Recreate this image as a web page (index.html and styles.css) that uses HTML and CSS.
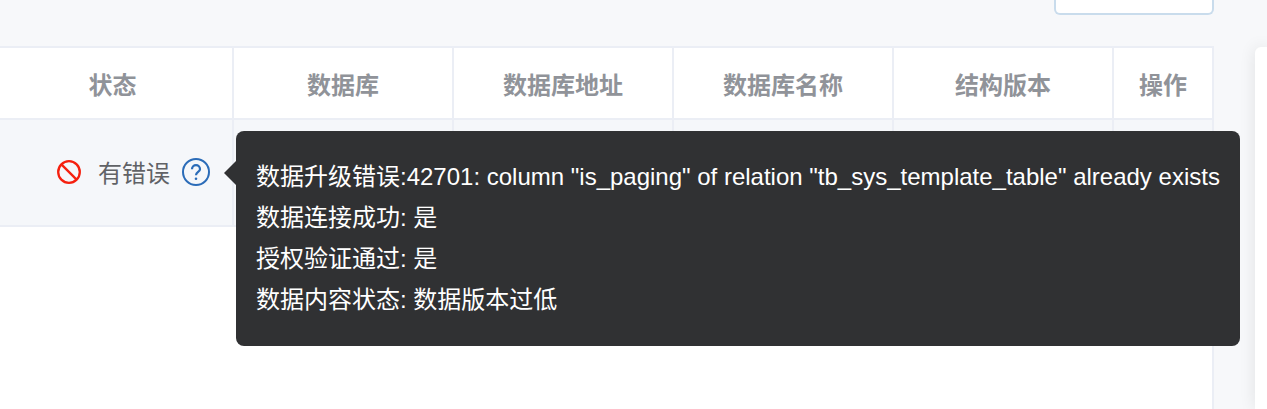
FILE: index.html
```html
<!DOCTYPE html>
<html lang="zh-CN">
<head>
  <meta charset="UTF-8">
  <title>数据库状态</title>
  <link rel="stylesheet" href="styles.css">
</head>
<body>

  <!-- Toolbar -->
  <div class="toolbar">
    <div class="tool-btn"></div>
  </div>

  <div class="content">
    <!-- Table -->
    <div class="table-panel">
      <div class="row head-row">
        <div class="cell col-status">状态</div>
        <div class="cell col-wide">数据库</div>
        <div class="cell col-wide">数据库地址</div>
        <div class="cell col-wide">数据库名称</div>
        <div class="cell col-wide">结构版本</div>
        <div class="cell col-op">操作</div>
      </div>
      <div class="row body-row">
        <div class="cell col-status status-cell">
          <svg class="icon-error" width="24" height="24" viewBox="0 0 24 24" fill="none" stroke="#f5200f" stroke-width="2.3">
            <circle cx="12" cy="12" r="10.8"/>
            <path d="M4.4 4.4 19.6 19.6"/>
          </svg>
          <span class="status-text">有错误</span>
          <svg class="icon-help" width="28" height="28" viewBox="0 0 28 28" fill="none" stroke="#2b6cb8">
            <circle cx="14" cy="14" r="13" stroke-width="2"/>
            <path d="M10 11.2a4 4 0 0 1 8 0c0 2.6-4 3-4 6" stroke-width="2.2"/>
            <circle cx="14" cy="20.8" r="1.3" fill="#2b6cb8" stroke="none"/>
          </svg>
        </div>
        <div class="cell col-wide"></div>
        <div class="cell col-wide"></div>
        <div class="cell col-wide"></div>
        <div class="cell col-wide"></div>
        <div class="cell col-op"></div>
      </div>
    </div>
    <div class="side-panel"></div>
  </div>

  <!-- Tooltip -->
  <div class="tooltip">
    <div>数据升级错误:42701: column "is_paging" of relation "tb_sys_template_table" already exists</div>
    <div>数据连接成功: 是</div>
    <div>授权验证通过: 是</div>
    <div>数据内容状态: 数据版本过低</div>
  </div>

</body>
</html>
```

FILE: styles.css
```css
body {
  margin: 0;
  height: 409px;
  overflow: hidden;
  font-family: "Liberation Sans", "Noto Sans CJK SC", sans-serif;
  background-color: #f7f8fa;
  position: relative;
}

.toolbar {
  height: 46px;
  display: flex;
  justify-content: flex-end;
  align-items: flex-start;
  padding-right: 53px;
  box-sizing: border-box;
}

.tool-btn {
  width: 160px;
  height: 15px;
  box-sizing: border-box;
  background-color: #fff;
  border: 2px solid #c9dcec;
  border-top: 0;
  border-radius: 0 0 6px 6px;
}

.content {
  display: flex;
  height: 363px;
}

.table-panel {
  width: 1214px;
  background-color: #fff;
  border-top: 2px solid #ebeef5;
  border-right: 2px solid #ebeef5;
  box-sizing: border-box;
  flex-shrink: 0;
}

.row {
  display: flex;
  border-bottom: 2px solid #ebeef5;
  box-sizing: border-box;
}

.head-row {
  height: 72px;
}

.body-row {
  height: 107px;
  background-color: #f5f7fa;
}

.cell {
  border-right: 2px solid #ebeef5;
  box-sizing: border-box;
  display: flex;
  align-items: center;
  justify-content: center;
  font-size: 24px;
  font-weight: bold;
  color: #909399;
}

.col-status {
  width: 234px;
  padding-right: 7px;
}

.col-wide {
  width: 220px;
}

.col-op {
  width: 98px;
  border-right: 0;
}

.status-cell {
  justify-content: flex-end;
  padding-right: 22px;
  padding-bottom: 2px;
  font-weight: normal;
  color: #606266;
}

.status-text {
  margin-left: 16px;
  margin-right: 12px;
  position: relative;
}

.icon-error {
  margin-right: 1px;
}

.side-panel {
  width: 12px;
  margin-left: 41px;
  margin-top: 1px;
  flex-grow: 1;
  background-color: #fff;
  border-radius: 6px 0 0 0;
  box-shadow: 0 0 16px rgba(0, 0, 0, 0.1);
}

.tooltip {
  position: absolute;
  left: 236px;
  top: 131px;
  width: 1004px;
  height: 215px;
  box-sizing: border-box;
  padding: 25px 20px;
  background-color: #303133;
  border-radius: 8px;
  color: #fff;
  font-size: 24px;
  line-height: 41px;
  white-space: nowrap;
}

.tooltip::before {
  content: "";
  position: absolute;
  left: -12px;
  top: 30px;
  border-style: solid;
  border-width: 12px 12px 12px 0;
  border-color: transparent #303133 transparent transparent;
}
```
